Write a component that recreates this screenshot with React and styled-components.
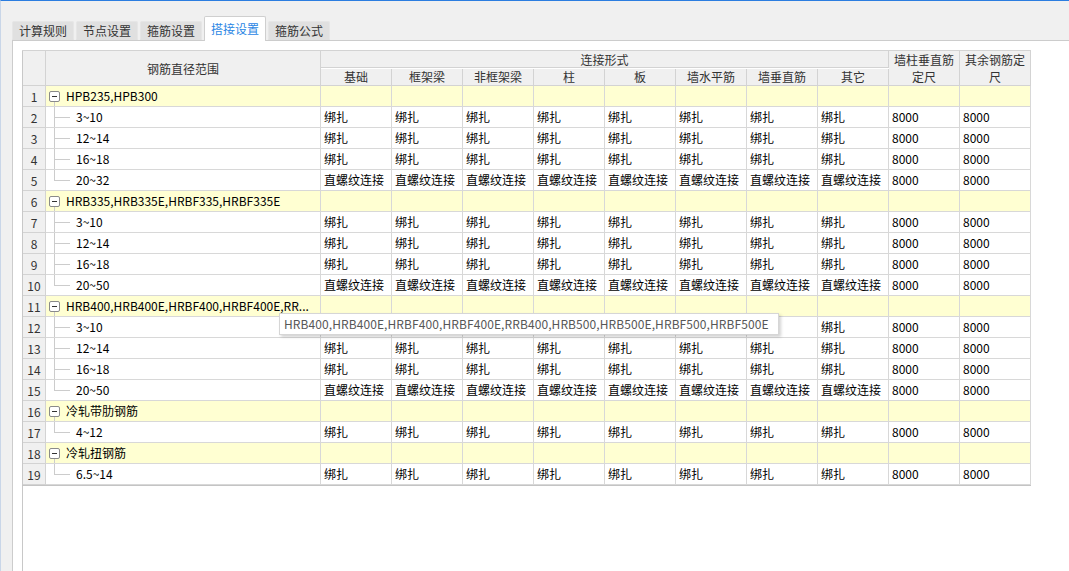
import styled, { createGlobalStyle } from "styled-components";

const GlobalStyle = createGlobalStyle`
    html, body {
        margin: 0;
        padding: 0;
    }
    body {
        font-family: "Noto Sans CJK SC", "Noto Sans", sans-serif;
        font-size: 12px;
        color: #000;
    }
`;

const TABS = ["计算规则", "节点设置", "箍筋设置", "搭接设置", "箍筋公式"];
const SUB_HEADERS = ["基础", "框架梁", "非框架梁", "柱", "板", "墙水平筋", "墙垂直筋", "其它"];

const GROUPS = [
    {
        name: "HPB235,HPB300",
        items: [
            ["3~10", "绑扎"],
            ["12~14", "绑扎"],
            ["16~18", "绑扎"],
            ["20~32", "直螺纹连接"],
        ],
    },
    {
        name: "HRB335,HRB335E,HRBF335,HRBF335E",
        items: [
            ["3~10", "绑扎"],
            ["12~14", "绑扎"],
            ["16~18", "绑扎"],
            ["20~50", "直螺纹连接"],
        ],
    },
    {
        name: "HRB400,HRB400E,HRBF400,HRBF400E,RR...",
        items: [
            ["3~10", "绑扎"],
            ["12~14", "绑扎"],
            ["16~18", "绑扎"],
            ["20~50", "直螺纹连接"],
        ],
    },
    {
        name: "冷轧带肋钢筋",
        items: [["4~12", "绑扎"]],
    },
    {
        name: "冷轧扭钢筋",
        items: [["6.5~14", "绑扎"]],
    },
];

const App = () => {
    let n = 0;
    const rows = [];
    GROUPS.forEach((g, gi) => {
        n += 1;
        rows.push(<GroupRow key={"g" + gi} n={n} name={g.name} />);
        g.items.forEach((it, ii) => {
            n += 1;
            rows.push(
                <ItemRow
                    key={"i" + gi + "-" + ii}
                    n={n}
                    range={it[0]}
                    mode={it[1]}
                    last={ii === g.items.length - 1}
                />
            );
        });
    });

    return (
        <>
            <GlobalStyle />
            <Page>
                <TabBar>
                    {TABS.map((t, i) => (
                        <Tab key={t} $active={i === 3}>
                            {t}
                        </Tab>
                    ))}
                </TabBar>
                <Panel>
                    <GridFrame>
                        <Grid>
                            <HeadCell $rowSpan={2}></HeadCell>
                            <HeadCell $rowSpan={2}>钢筋直径范围</HeadCell>
                            <HeadCell $colSpan={8} $h={17}>
                                连接形式
                            </HeadCell>
                            <HeadCell $rowSpan={2} $wrap>
                                墙柱垂直筋定尺
                            </HeadCell>
                            <HeadCell $rowSpan={2} $wrap>
                                其余钢筋定尺
                            </HeadCell>
                            {SUB_HEADERS.map((h) => (
                                <HeadCell key={h} $h={17}>
                                    {h}
                                </HeadCell>
                            ))}
                            {rows}
                        </Grid>
                    </GridFrame>
                </Panel>
                <Tooltip>
                    HRB400,HRB400E,HRBF400,HRBF400E,RRB400,HRB500,HRB500E,HRBF500,HRBF500E
                </Tooltip>
            </Page>
        </>
    );
};

const GroupRow = ({ n, name }) => (
    <>
        <NumCell>{n}</NumCell>
        <NameCell $group>
            <Toggle>
                <ToggleStem />
            </Toggle>
            <Label>{name}</Label>
        </NameCell>
        {Array.from({ length: 10 }).map((_, i) => (
            <Cell key={i} $group />
        ))}
    </>
);

const ItemRow = ({ n, range, mode, last }) => (
    <>
        <NumCell>{n}</NumCell>
        <NameCell>
            <Stem $last={last} />
            <Label>{range}</Label>
        </NameCell>
        {SUB_HEADERS.map((h) => (
            <Cell key={h}>{mode}</Cell>
        ))}
        <Cell>8000</Cell>
        <Cell>8000</Cell>
    </>
);

export default App;

const Page = styled.div`
    position: relative;
    display: flex;
    flex-direction: column;
    height: 100vh;
    box-sizing: border-box;
    background-color: #f0f0f0;
    border-top: 1px solid #2b7de0;
    border-left: 1px solid #c9d6e8;
    overflow: hidden;
`;

const TabBar = styled.div`
    display: flex;
    align-items: flex-end;
    gap: 2px;
    height: 40px;
    padding-left: 11px;
    flex-shrink: 0;
`;

const Tab = styled.div`
    position: relative;
    z-index: ${(p) => (p.$active ? 2 : 0)};
    display: flex;
    align-items: center;
    justify-content: center;
    box-sizing: border-box;
    padding: 0 6px;
    height: ${(p) => (p.$active ? "25px" : "19px")};
    margin-bottom: ${(p) => (p.$active ? "0" : "1px")};
    padding-bottom: ${(p) => (p.$active ? "2px" : "0")};
    background-color: ${(p) => (p.$active ? "#ffffff" : "#e0e0e0")};
    border: 1px solid ${(p) => (p.$active ? "#cfcfcf" : "#e6e6e6")};
    border-bottom: ${(p) => (p.$active ? "none" : "1px solid #e0e0e0")};
    border-radius: 2px 2px 0 0;
    color: ${(p) => (p.$active ? "#2a86e4" : "#333333")};
    font-size: 12px;
    white-space: nowrap;
`;

const Panel = styled.div`
    position: relative;
    z-index: 1;
    flex: 1;
    display: flex;
    margin-top: -1px;
    margin-left: 11px;
    padding: 9px 0 0 9px;
    background-color: #ffffff;
    border-top: 1px solid #cccccc;
    border-left: 1px solid #cccccc;
`;

const GridFrame = styled.div`
    flex: 1;
    border-left: 1px solid #c8c8c8;
`;

const Grid = styled.div`
    display: grid;
    grid-template-columns: 23px 275px repeat(10, 71px);
    width: max-content;
    border-top: 1px solid #d3d3d3;
    border-bottom: 1px solid #c4c4c4;
    margin-left: -1px;
    padding-left: 1px;
`;

const HeadCell = styled.div`
    grid-row: span ${(p) => p.$rowSpan || 1};
    grid-column: span ${(p) => p.$colSpan || 1};
    display: flex;
    align-items: center;
    justify-content: center;
    box-sizing: border-box;
    height: ${(p) => (p.$h ? p.$h + "px" : "auto")};
    padding: ${(p) => (p.$wrap ? "0 1px" : "0")};
    background-color: #f0f0f0;
    border-right: 1px solid #d3d3d3;
    border-bottom: 1px solid #d3d3d3;
    color: #333333;
    font-size: 12px;
    line-height: 17px;
    text-align: center;
    word-break: break-all;
`;

const NumCell = styled.div`
    display: flex;
    align-items: center;
    justify-content: center;
    box-sizing: border-box;
    height: 21px;
    background-color: #f0f0f0;
    border-right: 1px solid #d3d3d3;
    border-bottom: 1px solid #d3d3d3;
    color: #333333;
`;

const Cell = styled.div`
    display: flex;
    align-items: center;
    box-sizing: border-box;
    height: 21px;
    padding-left: 3px;
    padding-bottom: 1px;
    background-color: ${(p) => (p.$group ? "#ffffd2" : "#ffffff")};
    border-right: 1px solid #d8d8d8;
    border-bottom: 1px solid #d8d8d8;
    white-space: nowrap;
    overflow: hidden;
`;

const NameCell = styled(Cell)`
    padding-left: 0;
    padding-bottom: 0;
    align-items: stretch;
`;

const Toggle = styled.div`
    position: relative;
    align-self: center;
    box-sizing: border-box;
    width: 11px;
    height: 11px;
    margin-left: 3px;
    margin-right: 6px;
    border: 1px solid #8a8a8a;
    border-radius: 2px;
    background-color: #ffffff;

    &::before {
        content: "";
        position: absolute;
        left: 2px;
        top: 4px;
        width: 5px;
        height: 1px;
        background-color: #333333;
    }
`;

const ToggleStem = styled.span`
    position: absolute;
    left: 4px;
    top: 10px;
    width: 1px;
    height: 6px;
    background-color: #cccccc;
`;

const Stem = styled.div`
    position: relative;
    width: 22px;
    margin-left: 8px;
    flex-shrink: 0;

    &::before {
        content: "";
        position: absolute;
        left: 0;
        top: 0;
        width: 1px;
        height: ${(p) => (p.$last ? "10px" : "100%")};
        background-color: #cccccc;
    }

    &::after {
        content: "";
        position: absolute;
        left: 0;
        top: 10px;
        width: 16px;
        height: 1px;
        background-color: #cccccc;
    }
`;

const Label = styled.div`
    display: flex;
    align-items: center;
    padding-bottom: 1px;
    white-space: nowrap;
`;

const Tooltip = styled.div`
    position: absolute;
    z-index: 5;
    left: 278px;
    top: 312px;
    box-sizing: border-box;
    width: 500px;
    height: 22px;
    padding: 0 0 1px 4px;
    display: flex;
    align-items: center;
    background-color: #ffffff;
    border: 1px solid #d6d6d6;
    box-shadow: 2px 2px 3px rgba(0, 0, 0, 0.18);
    color: #575757;
    font-size: 12px;
    letter-spacing: 0.09px;
    white-space: nowrap;
`;
